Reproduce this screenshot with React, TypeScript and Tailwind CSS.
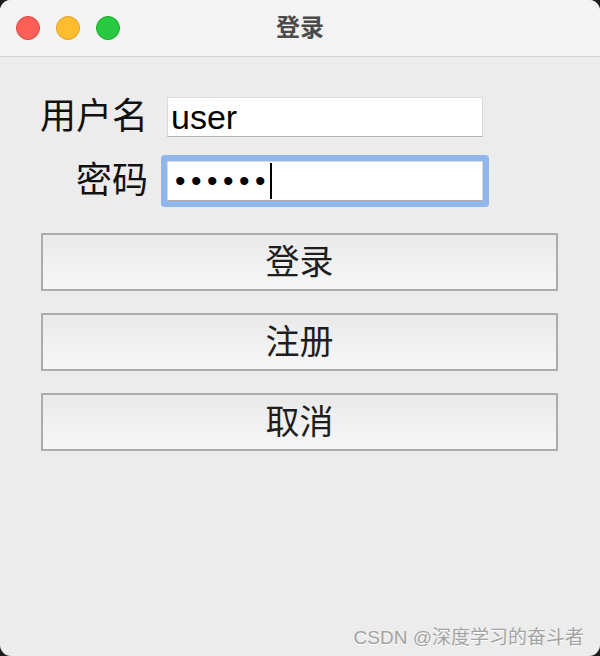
import React from "react";

const font = "font-['Liberation_Sans','Noto_Sans_CJK_SC',sans-serif]";

const ActionButton = ({ label }: { label: string }) => (
  <button
    className={`flex h-[58px] w-[517px] items-center justify-center border-2 border-[#acacac] bg-gradient-to-b from-[#e9e9e9] to-[#f7f7f7] text-[34px] leading-none text-[#1e1e1e] ${font}`}
  >
    {label}
  </button>
);

export default function App() {
  return (
    <div className="h-[656px] w-[600px] bg-[#1c1c1c]">
      <div className={`relative flex h-full w-full flex-col overflow-hidden rounded-[11px] bg-[#ececec] ${font}`}>
        {/* 标题栏 */}
        <div className="relative flex h-[57px] shrink-0 items-center border-b border-[#d2d2d2] bg-[#f3f3f3] px-[16px]">
          <div className="flex gap-[16px]">
            <span className="h-[24px] w-[24px] rounded-full border border-[#e0443e] bg-[#fe5f57]" />
            <span className="h-[24px] w-[24px] rounded-full border border-[#dea123] bg-[#febc2e]" />
            <span className="h-[24px] w-[24px] rounded-full border border-[#1aab29] bg-[#28c840]" />
          </div>
          <div className="pointer-events-none absolute inset-x-0 top-[16px] text-center text-[24px] font-semibold leading-none text-[#4b4b4b]">
            登录
          </div>
        </div>

        {/* 表单 */}
        <div className="flex flex-col pt-[40px]">
          <div className="flex items-center">
            <div className="w-[149px] pr-[1px] text-right text-[36px] leading-none text-[#111]">用户名</div>
            <div className="ml-[18px] flex h-[40px] w-[316px] items-center border border-[#dadada] border-b-[#b3b3b3] bg-white pl-[3px] text-[34px] leading-none text-black">
              user
            </div>
          </div>
          <div className="mt-[24px] flex items-center">
            <div className="w-[149px] pr-[1px] text-right text-[36px] leading-none text-[#111]">密码</div>
            <div className="ml-[18px] flex h-[40px] w-[316px] items-center rounded-[1px] border border-[#dadada] border-b-[#a9a9a9] bg-white pl-[7px] shadow-[0_0_0_6px_#90b6ec]">
              <span className="text-[30px] leading-none tracking-[5.5px] text-black">••••••</span>
              <span className="-ml-[1px] h-[36px] w-[2px] bg-black" />
            </div>
          </div>

          <div className="mt-[32px] flex flex-col gap-[22px] pl-[41px]">
            <ActionButton label="登录" />
            <ActionButton label="注册" />
            <ActionButton label="取消" />
          </div>
        </div>

        {/* 水印 */}
        <div className="absolute bottom-[9px] right-[16px] text-[19px] leading-none text-[#a3a3a3] [text-shadow:0_1px_0_#ffffff]">
          CSDN @深度学习的奋斗者
        </div>
      </div>
    </div>
  );
}
